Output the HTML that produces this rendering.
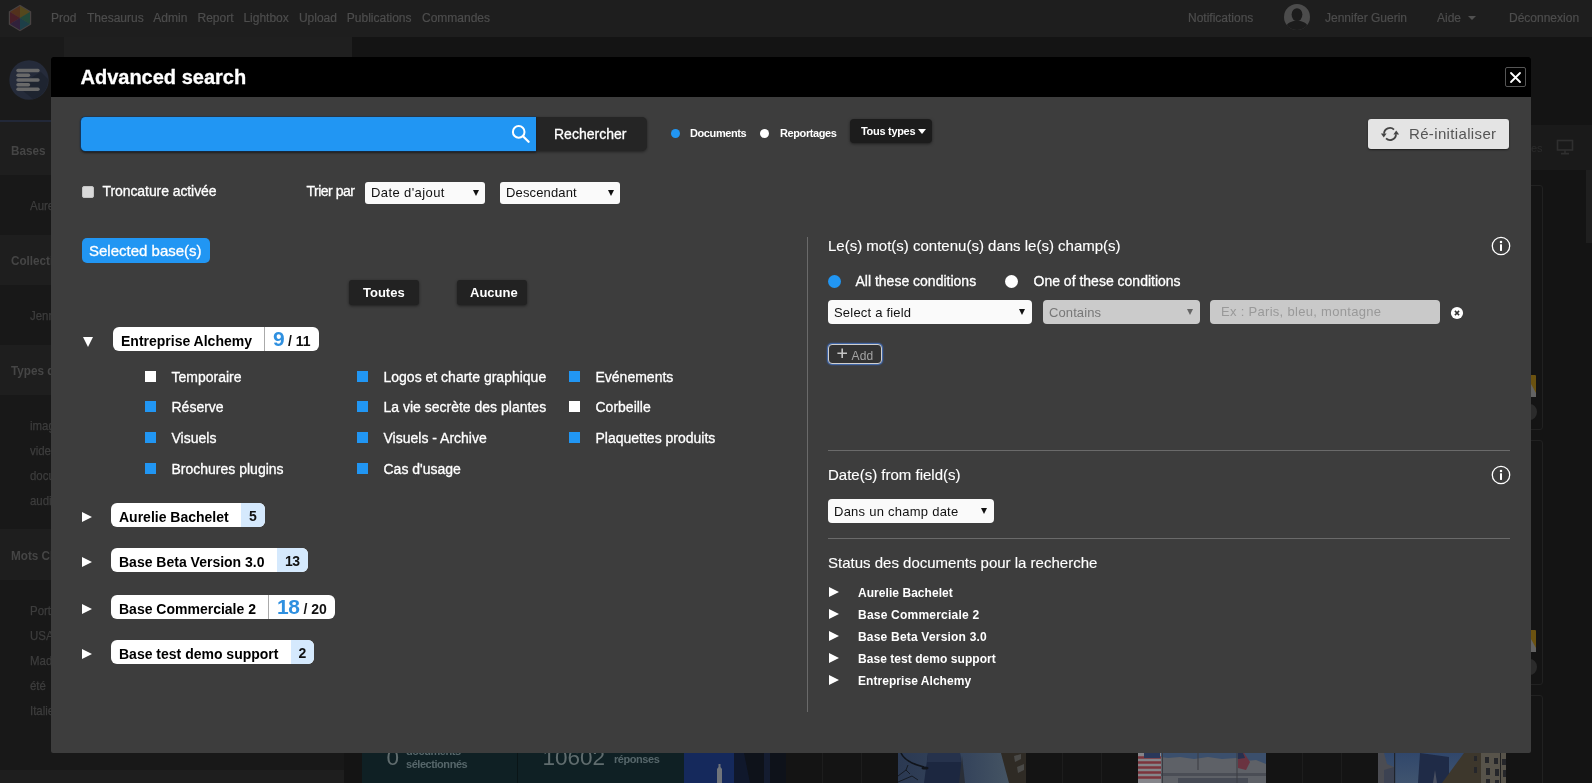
<!DOCTYPE html>
<html>
<head>
<meta charset="utf-8">
<title>Advanced search</title>
<style>
*{box-sizing:border-box;margin:0;padding:0}
html,body{width:1592px;height:783px;overflow:hidden;background:#141414;font-family:"Liberation Sans",sans-serif}
.abs{position:absolute}
#page{will-change:transform;position:relative;width:1592px;height:783px;overflow:hidden;background:#141414}
/* ---------- dimmed background app ---------- */
#nav{left:0;top:0;width:1592px;height:37px;background:#1e1e1e}
.navt{position:absolute;top:11px;font-size:12px;line-height:14px;color:#4d4d4d;white-space:nowrap;-webkit-text-stroke:0.2px #4d4d4d}
#side{left:0;top:37px;width:344px;height:746px;background:#181818}
.band{position:absolute;left:0;width:344px;background:#1e1e1e}
.sh{position:absolute;left:11px;font-size:13px;transform:scaleX(.9);transform-origin:0 50%;font-weight:bold;color:#454545;line-height:16px;white-space:nowrap}
.si{position:absolute;left:30px;font-size:13px;transform:scaleX(.88);transform-origin:0 50%;-webkit-text-stroke:0.25px #3d3d3d;color:#3d3d3d;line-height:16px;white-space:nowrap}
/* ---------- modal ---------- */
#modal{left:51px;top:57px;width:1480px;height:696px;background:#3d3d3d;border-radius:2px}
#mhead{left:0;top:0;width:1480px;height:40px;background:#000;border-radius:2px 2px 0 0}
.w{color:#fff;white-space:nowrap;position:absolute;-webkit-text-stroke:0.3px #fff}
.sel{position:absolute;background:#fafafa;border-radius:3px;height:22px;font-size:13px;line-height:22px;color:#111;white-space:nowrap}
.sel i{position:absolute;width:0;height:0;border-left:3.2px solid transparent;border-right:3.2px solid transparent;border-top:6.5px solid #111}
.cb{position:absolute;width:11px;height:11px;background:#2196f3}
.cb.off{background:#fff}
.lab{position:absolute;color:#fff;font-size:14px;line-height:16px;white-space:nowrap;letter-spacing:0;-webkit-text-stroke:0.3px #fff;margin-left:.5px}
.pill{position:absolute;height:24px;background:#fff;border-radius:6px;overflow:hidden;left:60px}
.pill b{position:absolute;left:8px;top:6px;font-size:14px;line-height:16px;color:#000;white-space:nowrap}
.pill .cnt{position:absolute;top:0;right:0;height:24px;background:#d5e9fd;font-size:14px;font-weight:bold;line-height:27px;text-align:center;color:#111;letter-spacing:-0.5px;text-indent:-0.5px}
.tri{position:absolute;width:0;height:0;border-top:5.7px solid transparent;border-bottom:5.7px solid transparent;border-left:10.5px solid #fff;margin-top:.3px}
.st{position:absolute;left:807px;color:#fff;font-size:12px;font-weight:bold;line-height:14px;white-space:nowrap;letter-spacing:0.05px;margin-top:1px}
.hr{position:absolute;left:777px;width:682px;height:1px;background:#6a6a6a}
</style>
</head>
<body>
<div id="page">

<!-- ================= BACKGROUND ================= -->
<div id="nav" class="abs">
  <!-- logo cube -->
  <svg class="abs" style="left:8px;top:4px;opacity:.7" width="24" height="28" viewBox="0 0 24 28">
    <polygon points="12,0.8 23.2,7.4 23.2,20.6 12,27.2 0.8,20.6 0.8,7.4" fill="#5a5252"/>
    <polygon points="12,2 22,8 12,14" fill="#6b5a1d"/>
    <polygon points="12,2 2,8 12,14" fill="#6a3a1c"/>
    <polygon points="2,8 2,20 12,14" fill="#5a1f2c"/>
    <polygon points="2,20 12,26 12,14" fill="#3a2348"/>
    <polygon points="12,26 22,20 12,14" fill="#1d4d5a"/>
    <polygon points="22,20 22,8 12,14" fill="#245a45"/>
  </svg>
  <span class="navt" style="left:51px">Prod</span>
  <span class="navt" style="left:87px">Thesaurus</span>
  <span class="navt" style="left:153.3px">Admin</span>
  <span class="navt" style="left:197.5px">Report</span>
  <span class="navt" style="left:243.4px">Lightbox</span>
  <span class="navt" style="left:298.9px">Upload</span>
  <span class="navt" style="left:346.8px">Publications</span>
  <span class="navt" style="left:422px">Commandes</span>
  <span class="navt" style="left:1188px">Notifications</span>
  <svg class="abs" style="left:1284px;top:4px" width="26" height="26" viewBox="0 0 26 26">
    <defs><clipPath id="av"><circle cx="13" cy="13" r="13"/></clipPath></defs>
    <circle cx="13" cy="13" r="13" fill="#4c4c4c"/>
    <g clip-path="url(#av)" fill="#1c1c1c">
      <ellipse cx="13" cy="10.6" rx="5.4" ry="6.4"/>
      <path d="M1,27 C1,19.5 7,16.8 13,16.8 C19,16.8 25,19.5 25,27 Z"/>
    </g>
  </svg>
  <span class="navt" style="left:1325px">Jennifer Guerin</span>
  <span class="navt" style="left:1437px">Aide</span>
  <i class="abs" style="left:1468px;top:16px;width:0;height:0;border-left:4px solid transparent;border-right:4px solid transparent;border-top:4px solid #505050"></i>
  <span class="navt" style="left:1509px">D&eacute;connexion</span>
</div>
<div id="side" class="abs">
  <div class="abs" style="left:0;top:0;width:64px;height:83px;background:#1a1a1a"></div>
  <div class="abs" style="left:64px;top:0;width:288px;height:83px;background:#1f1f1f"></div>
  <div class="abs" style="left:0;top:83px;width:344px;height:2px;background:#222838"></div>
  <!-- round menu icon -->
  <svg class="abs" style="left:9px;top:23px" width="40" height="40" viewBox="0 0 40 40">
    <circle cx="20" cy="20" r="19.7" fill="#252b3a"/>
    <path d="M32,12 L39,19 A19.7,19.7 0 0 1 24,39 L8,26 Z" fill="#1e2430"/>
    <g stroke="#696969" stroke-width="3.4" stroke-linecap="round">
      <line x1="9" y1="10.5" x2="29" y2="10.5"/><line x1="9" y1="15.2" x2="19.5" y2="15.2"/>
      <line x1="9" y1="20" x2="29" y2="20"/><line x1="9" y1="24.7" x2="19.5" y2="24.7"/>
      <line x1="9" y1="29.3" x2="29" y2="29.3"/>
    </g>
  </svg>
  <div class="band" style="top:85px;height:53px"></div>
  <div class="band" style="top:198px;height:50px"></div>
  <div class="band" style="top:308px;height:50px"></div>
  <div class="band" style="top:492px;height:51px"></div>
  <div class="band" style="top:733px;height:13px;width:344px"></div>
  <span class="sh" style="top:106px">Bases</span>
  <span class="si" style="top:161px">Aurelie</span>
  <span class="sh" style="top:216px">Collections</span>
  <span class="si" style="top:271px">Jennifer</span>
  <span class="sh" style="top:326px">Types de documents</span>
  <span class="si" style="top:381px">image</span>
  <span class="si" style="top:406px">video</span>
  <span class="si" style="top:431px">document</span>
  <span class="si" style="top:456px">audio</span>
  <span class="sh" style="top:511px">Mots Cl&eacute;s</span>
  <span class="si" style="top:566px">Portrait</span>
  <span class="si" style="top:591px">USA</span>
  <span class="si" style="top:616px">Madrid</span>
  <span class="si" style="top:641px">&eacute;t&eacute;</span>
  <span class="si" style="top:666px">Italie</span>
</div>
<!-- main area bottom strip -->
<div class="abs" style="left:362px;top:740px;width:322px;height:43px;background:#0f2024"></div>
<div class="abs" style="left:517px;top:740px;width:1px;height:43px;background:#0a1517"></div>
<span class="abs" style="left:386.5px;top:746px;font-size:22.5px;line-height:24px;color:#606c6e">0</span>
<span class="abs" style="left:406px;top:745px;font-size:11px;font-weight:bold;line-height:13px;color:#56666a;white-space:nowrap;letter-spacing:-0.45px">documents<br>s&eacute;lectionn&eacute;s</span>
<span class="abs" style="left:542.5px;top:746px;font-size:22.5px;line-height:24px;color:#606c6e">10602</span>
<span class="abs" style="left:614px;top:753px;font-size:11px;font-weight:bold;line-height:13px;color:#56666a;white-space:nowrap;letter-spacing:-0.45px">r&eacute;ponses</span>

<!-- thumbnails strip (dimmed) -->
<svg class="abs" style="left:684px;top:740px" width="102" height="43" viewBox="0 0 102 43">
  <rect width="102" height="43" fill="#15295c"/>
  <rect x="53" width="49" height="43" fill="#0e121a"/>
  <polygon points="50,13 60,13 66,43 50,43" fill="#10182c"/>
  <rect x="80" y="13" width="6" height="30" fill="#141c30"/>
  <path d="M33,43 L33,29 L34.5,27 L34.5,24 L36.5,24 L36.5,27 L38,29 L38,43 Z" fill="#70747a"/>
</svg>
<div class="abs" style="left:822px;top:740px;width:1px;height:43px;background:#1d1d1d"></div>
<div class="abs" style="left:861px;top:740px;width:1px;height:43px;background:#1d1d1d"></div>
<svg class="abs" style="left:898px;top:740px" width="128" height="43" viewBox="0 0 128 43">
  <defs><linearGradient id="g2" x1="0" x2="1"><stop offset="0" stop-color="#2b3952"/><stop offset=".55" stop-color="#36455c"/><stop offset="1" stop-color="#4b5a66"/></linearGradient></defs>
  <rect width="128" height="43" fill="url(#g2)"/>
  <polygon points="30,13 62,13 66,43 26,43" fill="#1c2740"/>
  <polygon points="30,13 62,13 63,22 29,22" fill="#26324c"/>
  <polygon points="64,16 67,43 61,43" fill="#2a2f38"/>
  <polygon points="103,13 128,13 128,43 111,43" fill="#2f2b25"/>
  <g fill="#4a4a48"><polygon points="116,16 123,14 123,19 117,22"/><polygon points="119,27 126,24 126,30 120,33"/></g>
  <path d="M3,13 C6,20 14,24 26,27" stroke="#11151c" stroke-width="1.6" fill="none"/>
  <ellipse cx="27" cy="28" rx="3.5" ry="1.6" fill="#11151c"/>
  <path d="M0,36 L8,30 L12,34 M8,30 L10,25 M0,42 L14,36 L20,40" stroke="#161b24" stroke-width="1" fill="none"/>
</svg>
<div class="abs" style="left:1062px;top:740px;width:1px;height:43px;background:#1d1d1d"></div>
<div class="abs" style="left:1101px;top:740px;width:1px;height:43px;background:#1d1d1d"></div>
<svg class="abs" style="left:1138px;top:740px" width="128" height="43" viewBox="0 0 128 43">
  <rect width="128" height="43" fill="#5e6167"/>
  <polygon points="22,13 128,13 128,24 118,20 108,21 98,18 84,19 70,17 56,19 42,17 30,18 22,17" fill="#3b4f6c"/>
  <rect x="22" y="33" width="106" height="3" fill="#4a4d55"/>
  <rect x="40" y="38" width="70" height="5" fill="#464a54"/>
  <g><rect x="0" y="13" width="23" height="30" fill="#85858a"/>
  <path d="M0,17.5 h23 M0,22.5 h23 M0,27.5 h23 M0,32.5 h23 M0,37.5 h23" stroke="#7c343d" stroke-width="2.6"/>
  <rect x="6" y="13" width="16" height="5" fill="#2a385a"/></g>
  <path d="M24.5,13 V43 M60,13 V30 M99,13 V43" stroke="#3a3c42" stroke-width="1"/>
  <polygon points="100,13 106,13 112,22 108,30 100,28" fill="#6a3340"/>
  <polygon points="100,13 105,13 107,18 100,19" fill="#27304e"/>
</svg>
<div class="abs" style="left:1302px;top:740px;width:1px;height:43px;background:#1d1d1d"></div>
<div class="abs" style="left:1341px;top:740px;width:1px;height:43px;background:#1d1d1d"></div>
<svg class="abs" style="left:1378px;top:740px" width="128" height="43" viewBox="0 0 128 43">
  <defs><linearGradient id="g4" x1="0" x2="0" y1="0" y2="1"><stop offset=".3" stop-color="#31476b"/><stop offset="1" stop-color="#40546f"/></linearGradient></defs>
  <rect width="128" height="43" fill="url(#g4)"/>
  <polygon points="0,13 6,13 9,24 16,27 16,43 0,43" fill="#4b4c52"/>
  <polygon points="6,30 16,27 16,43 6,43" fill="#3c4252"/>
  <rect x="16" y="13" width="1.2" height="30" fill="#20242c"/>
  <polygon points="42,13 71,17 71,43 40,43" fill="#1f2b47"/>
  <polygon points="57,30 59,43 55,43" fill="#4a5060"/>
  <polygon points="86,13 128,13 128,43 64,43" fill="#3d372c"/>
  <polygon points="103,13 128,13 128,43 103,43" fill="#57534a"/>
  <g fill="#25262a"><rect x="107" y="17" width="4" height="6"/><rect x="116" y="18" width="4" height="6"/><rect x="124" y="19" width="4" height="6"/><rect x="108" y="28" width="4" height="7"/><rect x="117" y="29" width="4" height="7"/><rect x="125" y="30" width="3" height="7"/><rect x="108" y="39" width="4" height="4"/><rect x="117" y="40" width="4" height="3"/><rect x="96" y="16" width="3" height="5"/><rect x="96" y="27" width="3" height="6"/></g>
</svg>
<!-- right edge bits -->
<div class="abs" style="left:1531px;top:125px;width:61px;height:45px;background:#1a1a1a"></div>
<svg class="abs" style="left:1556px;top:139px" width="20" height="18" viewBox="0 0 20 18" fill="none" stroke="#2f2f2f" stroke-width="1.6"><rect x="1.5" y="1.5" width="15" height="9.5"/><path d="M9,11 L9,14 M5,14.6 L13,14.6"/></svg>
<span class="abs" style="left:1531px;top:142px;font-size:11px;line-height:13px;color:#2b2b2b">es</span>
<div class="abs" style="left:1586px;top:170px;width:6px;height:73px;background:#1f1f1f"></div>
<div class="abs" style="left:1500px;top:185px;width:43px;height:245px;border:1px solid #212121;border-radius:3px"></div>
<div class="abs" style="left:1500px;top:440px;width:43px;height:245px;border:1px solid #212121;border-radius:3px"></div>
<div class="abs" style="left:1500px;top:695px;width:43px;height:100px;border:1px solid #212121;border-radius:3px"></div>
<div class="abs" style="left:1525px;top:375px;width:11px;height:22px;background:#6b5210;border-radius:1px"></div>
<div class="abs" style="left:1525px;top:630px;width:11px;height:22px;background:#6b5210;border-radius:1px"></div>
<svg class="abs" style="left:1531px;top:384px" width="5" height="13"><polygon points="0,0 5,9 5,13 0,13" fill="#636363"/></svg>
<svg class="abs" style="left:1531px;top:639px" width="5" height="13"><polygon points="0,0 5,9 5,13 0,13" fill="#636363"/></svg>
<div class="abs" style="left:1522px;top:403.5px;width:15px;height:16.5px;border-radius:50%;background:#2b2b2b"></div>
<div class="abs" style="left:1522px;top:658.5px;width:15px;height:16.5px;border-radius:50%;background:#2b2b2b"></div>

<!-- ================= MODAL ================= -->
<div id="modal" class="abs">
  <div id="mhead" class="abs"></div>
  <span class="w" style="left:29.5px;top:8px;font-size:20px;font-weight:bold;line-height:24px">Advanced search</span>
  <!-- close -->
  <div class="abs" style="left:1454px;top:10px;width:21px;height:20px;border:1px solid #555;border-radius:2px"></div>
  <svg class="abs" style="left:1458px;top:14px" width="13" height="13" viewBox="0 0 13 13"><path d="M2,2 L11,11 M11,2 L2,11" stroke="#fff" stroke-width="1.8" stroke-linecap="round"/></svg>

  <!-- search bar -->
  <div class="abs" style="left:30px;top:60px;width:566px;height:34px;border-radius:5px;background:#252525;box-shadow:0 1px 3px rgba(0,0,0,.45)"></div>
  <div class="abs" style="left:30px;top:60px;width:455px;height:34px;border-radius:4.5px 0 0 4.5px;background:#2196f3;box-shadow:-0.5px 0 0 0.6px #14375c,0 1.5px 2px rgba(0,0,0,.35)"></div>
  <svg class="abs" style="left:460px;top:67px" width="20" height="20" viewBox="0 0 20 20"><circle cx="7.7" cy="7.9" r="5.8" fill="none" stroke="#fff" stroke-width="2"/><path d="M12,12.2 L17.6,17.8" stroke="#fff" stroke-width="2.3" stroke-linecap="round"/></svg>
  <span class="w" style="left:503px;top:69px;font-size:14px;line-height:16px">Rechercher</span>

  <i class="abs" style="left:620px;top:72px;width:9px;height:9px;border-radius:50%;background:#2196f3"></i>
  <span class="w" style="left:639px;top:70px;font-size:11px;font-weight:bold;line-height:13px;letter-spacing:-0.4px;-webkit-text-stroke:0">Documents</span>
  <i class="abs" style="left:709px;top:72px;width:9px;height:9px;border-radius:50%;background:#fff"></i>
  <span class="w" style="left:729px;top:70px;font-size:11px;font-weight:bold;line-height:13px;letter-spacing:-0.4px;-webkit-text-stroke:0">Reportages</span>
  <div class="abs" style="left:799px;top:62px;width:82px;height:24px;border-radius:4px;background:#1c1c1c;box-shadow:0 1px 3px rgba(0,0,0,.5)"></div>
  <span class="w" style="left:810px;top:68px;font-size:11px;font-weight:bold;line-height:13px;letter-spacing:-0.3px;-webkit-text-stroke:0">Tous types</span>
  <i class="abs" style="left:867px;top:72px;width:0;height:0;border-left:4.5px solid transparent;border-right:4.5px solid transparent;border-top:5px solid #fff"></i>

  <!-- reset button -->
  <div class="abs" style="left:1317px;top:62px;width:141px;height:30px;border-radius:3px;background:#e4e4e4;box-shadow:0 1px 2px rgba(0,0,0,.5)"></div>
  <svg class="abs" style="left:1329px;top:67px" width="20" height="20" viewBox="0 0 20 20"><g fill="none" stroke="#444" stroke-width="1.8"><path d="M4.0,9.6 A5.9,5.9 0 0 1 14.0,5.7"/><path d="M16.0,10.4 A5.9,5.9 0 0 1 6.0,14.3"/></g><polygon points="0.9,9.4 6.6,9.4 3.8,13.6" fill="#444"/><polygon points="19.1,10.6 13.4,10.6 16.2,6.4" fill="#444"/></svg>
  <span class="abs" style="left:1358px;top:68px;font-size:15px;line-height:17px;color:#555;white-space:nowrap;letter-spacing:0.35px">R&eacute;-initialiser</span>

  <!-- row 2 -->
  <div class="abs" style="left:31px;top:129px;width:12px;height:12px;border-radius:2px;background:#d9d9d9;border:1px solid #c4c4c4"></div>
  <span class="lab" style="left:51px;top:126px;letter-spacing:-0.08px">Troncature activ&eacute;e</span>
  <span class="lab" style="left:255px;top:126px;letter-spacing:-0.5px">Trier par</span>
  <div class="sel" style="left:314px;top:125px;width:120px;padding-left:6px;letter-spacing:0.4px">Date d'ajout<i style="left:108px;top:8px"></i></div>
  <div class="sel" style="left:449px;top:125px;width:120px;padding-left:6px;letter-spacing:0.15px">Descendant<i style="left:108px;top:8px"></i></div>

  <!-- selected bases -->
  <div class="abs" style="left:31px;top:181px;width:128px;height:25px;border-radius:5px;background:#2196f3"></div>
  <span class="w" style="left:38px;top:185px;font-size:15px;line-height:17px">Selected base(s)</span>

  <div class="abs" style="left:298px;top:223px;width:70px;height:25px;border-radius:3px;background:#222;box-shadow:0 1px 3px rgba(0,0,0,.5)"></div>
  <span class="w" style="left:312px;top:228px;font-size:13px;font-weight:bold;line-height:15px;-webkit-text-stroke:0">Toutes</span>
  <div class="abs" style="left:406px;top:223px;width:70px;height:25px;border-radius:3px;background:#222;box-shadow:0 1px 3px rgba(0,0,0,.5)"></div>
  <span class="w" style="left:419px;top:228px;font-size:13px;font-weight:bold;line-height:15px;-webkit-text-stroke:0">Aucune</span>

  <!-- base 1 -->
  <i class="abs" style="left:32px;top:280px;width:0;height:0;border-left:5px solid transparent;border-right:5px solid transparent;border-top:10px solid #fff"></i>
  <div class="pill" style="left:62px;top:270px;width:206px"><b>Entreprise Alchemy</b>
    <div class="abs" style="left:151px;top:0;width:1px;height:24px;background:#aaa"></div>
    <span class="abs" style="left:160px;top:0.6px;font-size:21px;font-weight:bold;line-height:22px;color:#2f90e0;letter-spacing:-0.5px">9</span>
    <span class="abs" style="left:175px;top:6px;font-size:14px;font-weight:bold;line-height:16px;color:#111;white-space:nowrap">/ 11</span>
  </div>
  <i class="cb off" style="left:94px;top:314px"></i><span class="lab" style="left:120px;top:312px">Temporaire</span>
  <i class="cb" style="left:94px;top:344px"></i><span class="lab" style="left:120px;top:342px">R&eacute;serve</span>
  <i class="cb" style="left:94px;top:375px"></i><span class="lab" style="left:120px;top:373px">Visuels</span>
  <i class="cb" style="left:94px;top:406px"></i><span class="lab" style="left:120px;top:404px">Brochures plugins</span>
  <i class="cb" style="left:306px;top:314px"></i><span class="lab" style="left:332px;top:312px">Logos et charte graphique</span>
  <i class="cb" style="left:306px;top:344px"></i><span class="lab" style="left:332px;top:342px">La vie secr&egrave;te des plantes</span>
  <i class="cb" style="left:306px;top:375px"></i><span class="lab" style="left:332px;top:373px">Visuels - Archive</span>
  <i class="cb" style="left:306px;top:406px"></i><span class="lab" style="left:332px;top:404px">Cas d'usage</span>
  <i class="cb" style="left:518px;top:314px"></i><span class="lab" style="left:544px;top:312px">Ev&eacute;nements</span>
  <i class="cb off" style="left:518px;top:344px"></i><span class="lab" style="left:544px;top:342px">Corbeille</span>
  <i class="cb" style="left:518px;top:375px"></i><span class="lab" style="left:544px;top:373px">Plaquettes produits</span>

  <!-- other bases -->
  <i class="tri" style="left:31px;top:455px"></i>
  <div class="pill" style="top:446px;width:154px"><b>Aurelie Bachelet</b><div class="cnt" style="width:24px">5</div></div>
  <i class="tri" style="left:31px;top:500px"></i>
  <div class="pill" style="top:491px;width:197px"><b>Base Beta Version 3.0</b><div class="cnt" style="width:31px">13</div></div>
  <i class="tri" style="left:31px;top:547px"></i>
  <div class="pill" style="top:538px;width:224px"><b>Base Commerciale 2</b>
    <div class="abs" style="left:157px;top:0;width:1px;height:24px;background:#aaa"></div>
    <span class="abs" style="left:166px;top:0.6px;font-size:21px;font-weight:bold;line-height:22px;color:#2f90e0;letter-spacing:-0.5px">18</span>
    <span class="abs" style="left:192.5px;top:6px;font-size:14px;font-weight:bold;line-height:16px;color:#111;white-space:nowrap">/ 20</span>
  </div>
  <i class="tri" style="left:31px;top:592px"></i>
  <div class="pill" style="top:583px;width:203px"><b>Base test demo support</b><div class="cnt" style="width:23px">2</div></div>
  <!-- ===== right panel ===== -->
  <div class="abs" style="left:756px;top:180px;width:1px;height:475px;background:#6a6a6a"></div>
  <span class="w" style="left:777px;top:180px;font-size:15px;line-height:17px;-webkit-text-stroke:0.12px #fff">Le(s) mot(s) contenu(s) dans le(s) champ(s)</span>
  <svg class="abs info" style="left:1440px;top:179px" width="20" height="20" viewBox="0 0 20 20"><circle cx="10" cy="10" r="8.7" fill="none" stroke="#fff" stroke-width="1.3"/><circle cx="10" cy="6" r="1.25" fill="#fff"/><rect x="9" y="8.3" width="2" height="6.6" fill="#fff"/></svg>
  <i class="abs" style="left:777px;top:218px;width:13px;height:13px;border-radius:50%;background:#2196f3"></i>
  <span class="lab" style="left:804px;top:216px">All these conditions</span>
  <i class="abs" style="left:954px;top:218px;width:13px;height:13px;border-radius:50%;background:#fff"></i>
  <span class="lab" style="left:982px;top:216px">One of these conditions</span>
  <div class="sel" style="left:777px;top:243px;width:204px;height:24px;line-height:24px;padding-left:6px;border-radius:4px;letter-spacing:0.2px;line-height:26px">Select a field<i style="left:191px;top:9px"></i></div>
  <div class="sel" style="left:992px;top:243px;width:157px;height:24px;line-height:24px;padding-left:6px;border-radius:4px;background:#cbcbcb;color:#777;letter-spacing:0.1px;line-height:26px">Contains<i style="left:144px;top:9px;border-top-color:#666"></i></div>
  <div class="abs" style="left:1159px;top:243px;width:230px;height:24px;border-radius:4px;background:#c9c9c9;font-size:13px;line-height:23px;color:#999;padding-left:11px;white-space:nowrap;letter-spacing:0.3px">Ex : Paris, bleu, montagne</div>
  <svg class="abs" style="left:1399px;top:249px" width="14" height="14" viewBox="0 0 14 14"><circle cx="7" cy="7" r="6.1" fill="#fff"/><path d="M4.9,4.9 L9.1,9.1 M9.1,4.9 L4.9,9.1" stroke="#333" stroke-width="1.5"/></svg>
  <div class="abs" style="left:777px;top:287px;width:54px;height:20px;border:1px solid #cfcfcf;border-radius:4px;background:#333;box-shadow:0 0 0 1px #4166a6,0 0 2px 1px #3a5a94"></div>
  <svg class="abs" style="left:785px;top:290px" width="12" height="12" viewBox="0 0 12 12"><path d="M6.2,1.5 V11 M1.4,6.2 H11" stroke="#c4c4c4" stroke-width="1.6" fill="none"/></svg>
  <span class="abs" style="left:800.5px;top:291.5px;font-size:12px;line-height:14px;color:#a4a4a4;letter-spacing:0.2px">Add</span>

  <div class="hr" style="top:393px"></div>
  <span class="w" style="left:777px;top:409px;font-size:15px;line-height:17px;-webkit-text-stroke:0.12px #fff">Date(s) from field(s)</span>
  <svg class="abs info" style="left:1440px;top:408px" width="20" height="20" viewBox="0 0 20 20"><circle cx="10" cy="10" r="8.7" fill="none" stroke="#fff" stroke-width="1.3"/><circle cx="10" cy="6" r="1.25" fill="#fff"/><rect x="9" y="8.3" width="2" height="6.6" fill="#fff"/></svg>
  <div class="sel" style="left:777px;top:442px;width:166px;height:24px;line-height:24px;padding-left:6px;border-radius:4px;letter-spacing:0.25px;line-height:26px">Dans un champ date<i style="left:153px;top:9px"></i></div>
  <div class="hr" style="top:481px"></div>
  <span class="w" style="left:777px;top:497px;font-size:15px;line-height:17px;-webkit-text-stroke:0.12px #fff">Status des documents pour la recherche</span>
  <i class="tri" style="left:778px;top:530px"></i><span class="st" style="top:528px">Aurelie Bachelet</span>
  <i class="tri" style="left:778px;top:552px"></i><span class="st" style="top:550px;letter-spacing:0.22px">Base Commerciale 2</span>
  <i class="tri" style="left:778px;top:574px"></i><span class="st" style="top:572px;letter-spacing:0.2px">Base Beta Version 3.0</span>
  <i class="tri" style="left:778px;top:596px"></i><span class="st" style="top:594px">Base test demo support</span>
  <i class="tri" style="left:778px;top:618px"></i><span class="st" style="top:616px">Entreprise Alchemy</span>
</div>

</div>
</body>
</html>
